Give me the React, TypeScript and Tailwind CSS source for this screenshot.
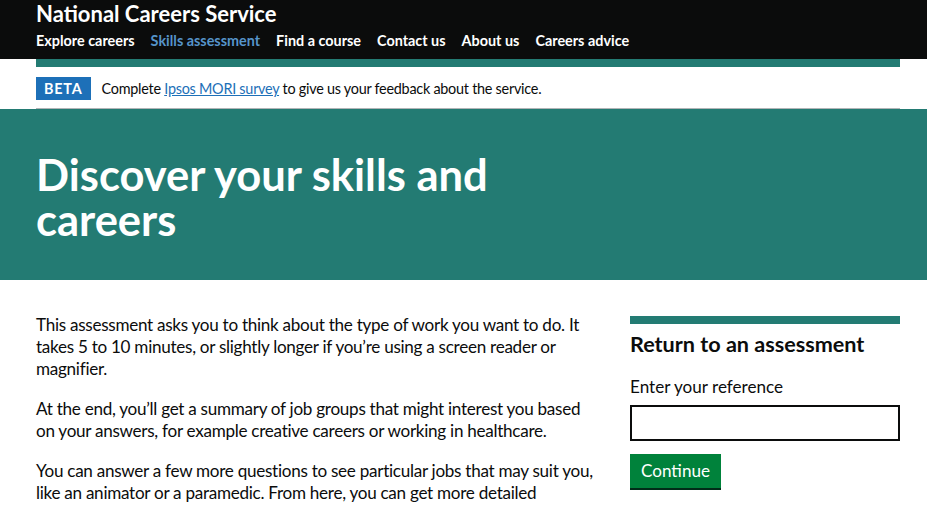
export default function App() {
  const font = { fontFamily: 'Lato, "Liberation Sans", Arial, sans-serif' };
  return (
    <div className="h-[505px] w-[927px] overflow-hidden bg-white text-[#0b0c0c]" style={font}>
      <header className="bg-[#0b0c0c] text-white">
        <div className="ml-[36px] w-[864px] pt-[1px] pb-[9px]">
          <div className="text-[22px] font-bold leading-[26px]">National Careers Service</div>
          <nav className="mt-[5px] flex gap-[16px] text-[14.4px] font-bold leading-[18px]">
            <span>Explore careers</span>
            <span className="text-[#5694ca]">Skills assessment</span>
            <span>Find a course</span>
            <span>Contact us</span>
            <span>About us</span>
            <span>Careers advice</span>
          </nav>
        </div>
      </header>
      <div className="ml-[36px] w-[864px]">
        <div className="h-[8px] bg-[#237b73]" />
        <div className="flex items-center gap-[11px] border-b border-[#b1b4b6] pt-[10px] pb-[8px]">
          <span className="bg-[#1d70b8] px-[8px] py-[3px] text-[14.4px] font-bold leading-[17px] tracking-[0.8px] text-white">BETA</span>
          <span className="text-[14.4px] leading-[20px] tracking-[-0.25px]">
            Complete <span className="text-[#1d70b8] underline">Ipsos MORI survey</span> to give us your feedback about the service.
          </span>
        </div>
      </div>
      <section className="bg-[#237b73] text-white">
        <div className="ml-[36px] w-[864px] pt-[43px] pb-[38px]">
          <h1 className="max-w-[540px] text-[43.5px] font-bold leading-[45px]">Discover your skills and careers</h1>
        </div>
      </section>
      <main className="ml-[36px] flex w-[864px] justify-between pt-[34px]">
        <div className="w-[564px] text-[17.1px] leading-[22px] tracking-[-0.28px]">
          <p className="mb-[18px]">This assessment asks you to think about the type of work you want to do. It takes 5 to 10 minutes, or slightly longer if you’re using a screen reader or magnifier.</p>
          <p className="mb-[18px]">At the end, you’ll get a summary of job groups that might interest you based on your answers, for example creative careers or working in healthcare.</p>
          <p>You can answer a few more questions to see particular jobs that may suit you, like an animator or a paramedic. From here, you can get more detailed information about those careers.</p>
        </div>
        <aside className="mt-[2px] w-[270px]">
          <div className="h-[8px] bg-[#237b73]" />
          <h2 className="mt-[7px] text-[21.6px] font-bold leading-[27px]">Return to an assessment</h2>
          <label className="mt-[18px] block text-[17.1px] leading-[22px]">Enter your reference</label>
          <div className="mt-[7px] h-[36px] border-2 border-[#0b0c0c]" />
          <button className="mt-[13px] bg-[#00823b] px-[11px] pt-[6px] pb-[6px] text-[17.1px] leading-[22px] text-white shadow-[0_2px_0_#002d18]">Continue</button>
        </aside>
      </main>
    </div>
  );
}
